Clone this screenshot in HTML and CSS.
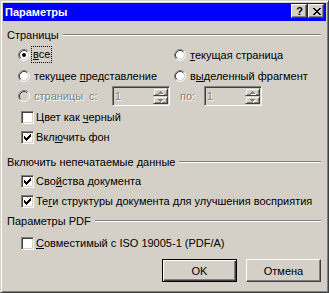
FILE: index.html
```html
<!DOCTYPE html>
<html lang="ru">
<head>
<meta charset="utf-8">
<title>Параметры</title>
<link rel="stylesheet" href="styles.css">
</head>
<body>
<svg class="defs" width="0" height="0" aria-hidden="true">
  <defs>
    <g id="radio-ring">
      <path d="M2.11 9.89 A5.5 5.5 0 0 1 9.89 2.11" fill="none" stroke="#808080"/>
      <path d="M9.89 2.11 A5.5 5.5 0 0 1 2.11 9.89" fill="none" stroke="#ffffff"/>
      <path d="M2.82 9.18 A4.5 4.5 0 0 1 9.18 2.82" fill="none" stroke="#404040"/>
      <path d="M9.18 2.82 A4.5 4.5 0 0 1 2.82 9.18" fill="none" stroke="#d4d0c8"/>
    </g>
    <path id="check" d="M0,2 H1 V3 H2 V4 H3 V3 H4 V2 H5 V1 H6 V0 H7 V3 H6 V4 H5 V5 H4 V6 H3 V7 H2 V6 H1 V5 H0 Z" fill="#000"/>
  </defs>
</svg>
<div class="window">
  <div class="titlebar">
    <span class="title">Параметры</span>
    <div class="capbtns">
      <span class="capbtn help">?</span>
      <span class="capbtn close"><svg width="8" height="7" viewBox="0 0 8 7" shape-rendering="crispEdges"><path d="M0,0h2v1h-2z M6,0h2v1h-2z M1,1h2v1h-2z M5,1h2v1h-2z M2,2h4v1h-4z M3,3h2v1h-2z M2,4h4v1h-4z M1,5h2v1h-2z M5,5h2v1h-2z M0,6h2v1h-2z M6,6h2v1h-2z" fill="#000"/></svg></span>
    </div>
  </div>
  <div class="content">
    <div class="group g1"><span class="gtext">Страницы</span><span class="rule"></span></div>
    <div class="radiogrid">
      <div class="opt"><svg class="radio" width="12" height="12" viewBox="0 0 12 12"><circle cx="6" cy="6" r="4" fill="#fff"/><use href="#radio-ring"/><circle cx="6" cy="6" r="2" fill="#000"/></svg><span class="focus"><u>в</u>се</span></div>
      <div class="opt"><svg class="radio" width="12" height="12" viewBox="0 0 12 12"><circle cx="6" cy="6" r="4" fill="#fff"/><use href="#radio-ring"/></svg><span><u>т</u>екущая страница</span></div>
      <div class="opt"><svg class="radio" width="12" height="12" viewBox="0 0 12 12"><circle cx="6" cy="6" r="4" fill="#fff"/><use href="#radio-ring"/></svg><span>текущее <u>п</u>редставление</span></div>
      <div class="opt"><svg class="radio" width="12" height="12" viewBox="0 0 12 12"><circle cx="6" cy="6" r="4" fill="#fff"/><use href="#radio-ring"/></svg><span>в<u>ы</u>деленный фрагмент</span></div>
    </div>
    <div class="rangerow">
      <div class="opt disabled rangeopt"><svg class="radio" width="12" height="12" viewBox="0 0 12 12"><circle cx="6" cy="6" r="4" fill="#d4d0c8"/><use href="#radio-ring"/></svg><span>страницы</span></div>
      <span class="disabled lbl-from">с:</span>
      <div class="spin"><span class="spinval">1</span><div class="spinbtns"><span class="sb"><svg width="5" height="3" viewBox="0 0 5 3" shape-rendering="crispEdges"><path d="M2,0h1v1h1v1h1v1h-5v-1h1v-1h1z" fill="#808080"/></svg></span><span class="sb"><svg width="5" height="3" viewBox="0 0 5 3" shape-rendering="crispEdges"><path d="M0,0h5v1h-1v1h-1v1h-1v-1h-1v-1h-1z" fill="#808080"/></svg></span></div></div>
      <span class="disabled lbl-to">по:</span>
      <div class="spin"><span class="spinval">1</span><div class="spinbtns"><span class="sb"><svg width="5" height="3" viewBox="0 0 5 3" shape-rendering="crispEdges"><path d="M2,0h1v1h1v1h1v1h-5v-1h1v-1h1z" fill="#808080"/></svg></span><span class="sb"><svg width="5" height="3" viewBox="0 0 5 3" shape-rendering="crispEdges"><path d="M0,0h5v1h-1v1h-1v1h-1v-1h-1v-1h-1z" fill="#808080"/></svg></span></div></div>
    </div>
    <div class="cbrow cb1"><span class="cbox"></span><span>Цвет как <u>ч</u>ерный</span></div>
    <div class="cbrow"><span class="cbox"><svg width="7" height="7" viewBox="0 0 7 7" shape-rendering="crispEdges"><use href="#check"/></svg></span><span>Вкл<u>ю</u>чить фон</span></div>
    <div class="group g2"><span class="gtext">Включить непечатаемые данные</span><span class="rule"></span></div>
    <div class="cbrow cb3"><span class="cbox"><svg width="7" height="7" viewBox="0 0 7 7" shape-rendering="crispEdges"><use href="#check"/></svg></span><span>Сво<u>й</u>ства документа</span></div>
    <div class="cbrow"><span class="cbox"><svg width="7" height="7" viewBox="0 0 7 7" shape-rendering="crispEdges"><use href="#check"/></svg></span><span>Те<u>г</u>и структуры документа для улучшения восприятия</span></div>
    <div class="group g3"><span class="gtext">Параметры PDF</span><span class="rule"></span></div>
    <div class="cbrow cb5"><span class="cbox"></span><span><u>С</u>овместимый с ISO 19005-1 (PDF/A)</span></div>
    <div class="buttons">
      <button class="btn default" type="button">OK</button>
      <button class="btn" type="button">Отмена</button>
    </div>
  </div>
</div>
</body>
</html>
```

FILE: styles.css
```css
* { box-sizing: border-box; }
html, body { margin: 0; padding: 0; background: #d4d0c8; }
body {
  font-family: "Liberation Sans", Arial, sans-serif;
  font-size: 11px;
  color: #000;
}
.defs { position: absolute; width: 0; height: 0; overflow: hidden; }
u { text-decoration: underline; text-underline-offset: 1px; }

.window {
  width: 329px;
  height: 293px;
  background: #d4d0c8;
  border: 1px solid;
  border-color: #d4d0c8 #404040 #404040 #d4d0c8;
  box-shadow: inset 1px 1px 0 #fff, inset -1px -1px 0 #808080;
  padding: 2px;
  display: flex;
  flex-direction: column;
}

.titlebar {
  height: 18px;
  background: #0000ff;
  display: flex;
  align-items: flex-start;
  justify-content: space-between;
  padding: 1px 2px 0 2px;
}
.title {
  color: #fff;
  font-weight: bold;
  font-size: 11px;
  line-height: 16px;
}
.capbtns { display: flex; gap: 1px; }
.capbtn {
  width: 16px;
  height: 14px;
  background: #d4d0c8;
  border: 1px solid;
  border-color: #fff #404040 #404040 #fff;
  box-shadow: inset -1px -1px 0 #808080;
  display: flex;
  align-items: center;
  justify-content: center;
}
.help {
  font-weight: bold;
  font-size: 11px;
  line-height: 12px;
  padding-left: 1px;
}
.close svg { display: block; margin-left: 1px; }

.content {
  flex: 1;
  display: flex;
  flex-direction: column;
  padding: 0 5px 0 4px;
}

.group {
  display: flex;
  align-items: center;
  height: 16px;
}
.gtext { line-height: 16px; white-space: nowrap; }
.rule {
  flex: 1;
  height: 2px;
  border-top: 1px solid #808080;
  border-bottom: 1px solid #fff;
  margin-left: 4px;
  margin-top: -1px;
}
.g1 { margin-top: 6px; }
.g2 { margin-top: 7px; }
.g3 { margin-top: 2px; }

.opt {
  display: flex;
  align-items: center;
  gap: 4px;
  height: 21px;
  white-space: nowrap;
}
.radio { display: block; flex: none; }
.radiogrid {
  margin-top: 1px;
  padding-left: 11px;
  display: grid;
  grid-template-columns: 156px 1fr;
}
.focus {
  outline: 1px dotted #000;
  outline-offset: 0;
  padding: 1px 1px;
  margin-left: -2px;
  line-height: 13px;
}

.disabled { color: #808080; text-shadow: 1px 1px 0 #fff; }

.rangerow {
  display: flex;
  align-items: center;
  height: 20px;
  padding-left: 11px;
}
.rangeopt { width: 71px; height: 20px; }
.lbl-from { width: 23px; }
.lbl-to { width: 24px; margin-left: 10px; }
.spin {
  width: 58px;
  height: 20px;
  border: 1px solid;
  border-color: #808080 #fff #fff #808080;
  box-shadow: inset 1px 1px 0 #404040, inset -1px -1px 0 #d4d0c8;
  padding: 1px;
  display: flex;
  justify-content: space-between;
  background: #d4d0c8;
}
.spinval {
  color: #808080;
  text-shadow: 1px 1px 0 #fff;
  padding-left: 1px;
  line-height: 16px;
}
.spinbtns {
  width: 15px;
  display: flex;
  flex-direction: column;
}
.sb {
  flex: 1;
  background: #d4d0c8;
  border: 1px solid;
  border-color: #d4d0c8 #404040 #404040 #d4d0c8;
  box-shadow: inset 1px 1px 0 #fff, inset -1px -1px 0 #808080;
  display: flex;
  align-items: center;
  justify-content: center;
}
.sb svg { display: block; filter: drop-shadow(1px 1px 0 #fff); }

.cbrow {
  display: flex;
  align-items: center;
  gap: 2px;
  height: 20px;
  padding-left: 14px;
  white-space: nowrap;
}
.cb1 { margin-top: 1px; }
.cb3 { margin-top: 1px; }
.cb5 { margin-top: 4px; }
.cbox {
  width: 13px;
  height: 13px;
  flex: none;
  background: #fff;
  border: 1px solid;
  border-color: #808080 #fff #fff #808080;
  box-shadow: inset 1px 1px 0 #404040, inset -1px -1px 0 #d4d0c8;
  display: flex;
  align-items: center;
  justify-content: center;
}
.cbox svg { display: block; }

.buttons {
  display: flex;
  justify-content: flex-end;
  gap: 9px;
  margin-top: 6px;
  padding-right: 0;
}
.btn {
  width: 75px;
  height: 23px;
  font-family: "Liberation Sans", Arial, sans-serif;
  font-size: 11px;
  color: #000;
  background: #d4d0c8;
  border: 1px solid;
  border-color: #fff #404040 #404040 #fff;
  box-shadow: inset -1px -1px 0 #808080, inset 1px 1px 0 #d4d0c8;
  padding: 0;
  margin: 0;
}
.btn.default {
  border: 1px solid #000;
  box-shadow: inset 1px 1px 0 #fff, inset -1px -1px 0 #404040, inset -2px -2px 0 #808080;
}
```
